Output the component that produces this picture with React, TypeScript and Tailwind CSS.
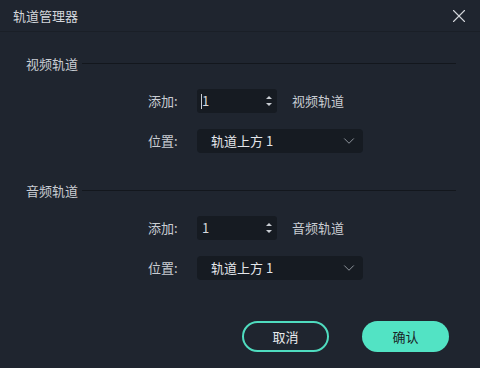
import { ChevronDown, X } from "lucide-react";

function Spinner() {
  return (
    <svg width="6" height="12" viewBox="0 0 6 12" className="text-[#c9cdd3]">
      <path d="M0 4 L3 1 L6 4 Z" fill="currentColor" />
      <path d="M0 8 L3 11 L6 8 Z" fill="currentColor" />
    </svg>
  );
}

function Section({ title, kind, caret }: { title: string; kind: string; caret?: boolean }) {
  return (
    <div>
      <div className="flex items-center pl-[26px] pr-[24px] h-[20px]">
        <span className="text-[13px] text-[#c9cdd3]">{title}</span>
        <div className="flex-1 h-px bg-[#13171d] ml-[4px] mt-[-2px]" />
      </div>
      <div className="flex flex-col gap-[16px] mt-[15px] pl-[148px]">
        <div className="flex items-center h-[24px]">
          <span className="w-[49px] text-[13px] text-[#c9cdd3]">添加:</span>
          <div className="relative w-[80px] h-[24px] bg-[#161b22] rounded-[3px] flex items-center pl-[4px] pr-[5px]">
            {caret && <div className="w-px h-[15px] bg-[#c9cdd3]" />}
            <span className={`text-[13px] text-[#d6d9de] ${caret ? "ml-0" : "ml-px"}`}>1</span>
            <div className="ml-auto">
              <Spinner />
            </div>
          </div>
          <span className="ml-[15px] text-[13px] text-[#c9cdd3]">{kind}</span>
        </div>
        <div className="flex items-center h-[24px]">
          <span className="w-[49px] text-[13px] text-[#c9cdd3]">位置:</span>
          <div className="w-[166px] h-[24px] bg-[#161b22] rounded-[4px] flex items-center pl-[14px] pr-[5px]">
            <span className="text-[13px] text-[#e4e6ea]">轨道上方 1</span>
            <ChevronDown className="ml-auto text-[#9aa0a8]" size={18} strokeWidth={1.2} />
          </div>
        </div>
      </div>
    </div>
  );
}

export default function App() {
  return (
    <div
      className="w-[480px] h-[368px] bg-[#1f252f] flex flex-col"
      style={{ fontFamily: '"Noto Sans CJK SC", "Noto Sans", sans-serif' }}
    >
      <div className="h-[32px] flex items-center pl-[13px] pr-[10px] border-b border-[#1a1f27]">
        <span className="text-[13px] text-[#d3d6db]">轨道管理器</span>
        <X className="ml-auto text-[#d3d6db]" size={22} strokeWidth={1.2} />
      </div>
      <div className="mt-[22px]">
        <Section title="视频轨道" kind="视频轨道" caret />
      </div>
      <div className="mt-[28px]">
        <Section title="音频轨道" kind="音频轨道" />
      </div>
      <div className="flex justify-end gap-[33px] pr-[31px] mt-[41px]">
        <button className="w-[87px] h-[31px] rounded-full border-2 border-[#4fdcbf] text-[13px] text-[#e8eaed]">
          取消
        </button>
        <button className="w-[87px] h-[31px] rounded-full bg-[#52e3c4] text-[13px] text-[#1a1f27]">
          确认
        </button>
      </div>
    </div>
  );
}
